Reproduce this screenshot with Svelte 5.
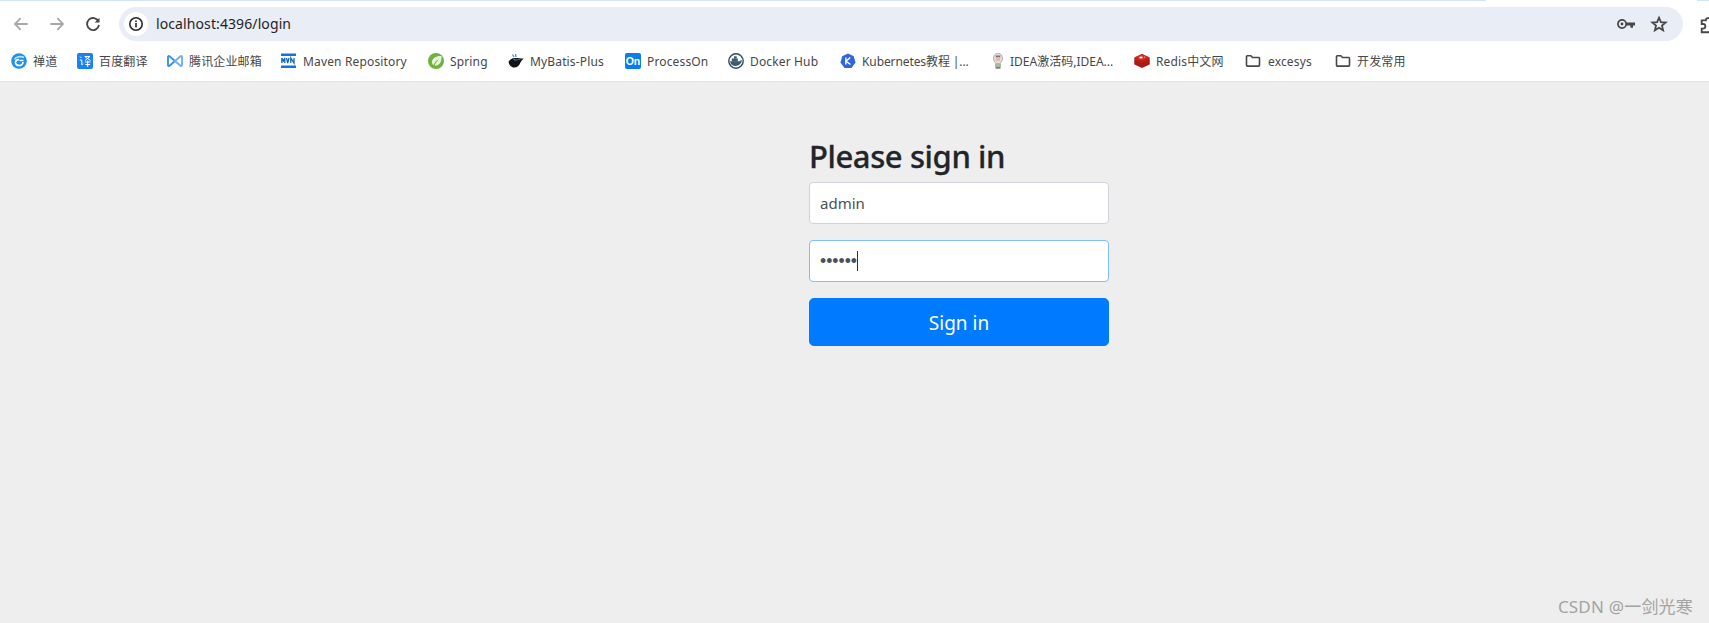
<script>
  const bookmarks = [
    { id: 'zen', label: '禅道', w: 66 },
    { id: 'fy', label: '百度翻译', w: 90 },
    { id: 'tx', label: '腾讯企业邮箱', w: 114 },
    { id: 'mvn', label: 'Maven Repository', w: 147 },
    { id: 'spring', label: 'Spring', w: 80 },
    { id: 'mb', label: 'MyBatis-Plus', w: 117 },
    { id: 'on', label: 'ProcessOn', w: 103 },
    { id: 'docker', label: 'Docker Hub', w: 112 },
    { id: 'k8s', label: 'Kubernetes教程 |...', w: 150, tight: true },
    { id: 'idea', label: 'IDEA激活码,IDEA...', w: 144, tight: true, close: true },
    { id: 'redis', label: 'Redis中文网', w: 111 },
    { id: 'folder', label: 'excesys', w: 90, wide: true },
    { id: 'folder', label: '开发常用', w: 70 }
  ];
</script>

<div class="page">
  <header class="chrome">
    <div class="progress">
      <span class="p1"></span>
      <span class="p2"></span>
    </div>
    <div class="toolbar">
      <div class="navs">
        <svg class="nav" viewBox="0 0 24 24" fill="none" stroke="#a8a8a8" stroke-width="2.200"><path d="M20 12H5M11.500 5L4.800 12l6.700 7"/></svg>
        <svg class="nav" viewBox="0 0 24 24" fill="none" stroke="#a8a8a8" stroke-width="2.200"><path d="M4 12h15M12.500 5l6.700 7-6.700 7"/></svg>
        <svg class="nav" viewBox="0 0 24 24" fill="none" stroke="#474747" stroke-width="2.200"><path d="M18.600 9A7.200 7.200 0 1 0 19.200 13"/><path d="M19.800 4.400V10.200H14z" fill="#474747" stroke="none"/></svg>
      </div>
      <div class="omnibox">
        <span class="info">
          <svg viewBox="0 0 16 16" width="16" height="16" fill="none"><circle cx="8" cy="8" r="6.200" stroke="#2b2b2b" stroke-width="1.600"/><rect x="7.200" y="7" width="1.600" height="4.400" fill="#2b2b2b"/><rect x="7.200" y="4.500" width="1.600" height="1.600" fill="#2b2b2b"/></svg>
        </span>
        <span class="url">localhost:4396/login</span>
        <span class="spacer"></span>
        <svg class="key" viewBox="0 0 18 10" width="18" height="10" fill="none"><circle cx="5" cy="5" r="4.100" stroke="#474747" stroke-width="1.700"/><circle cx="5" cy="5" r="1.400" fill="#474747"/><path d="M9 3.600h9v2.800h-2v2.400h-2.600V6.400H9z" fill="#474747"/></svg>
        <svg class="star" viewBox="0 0 24 24" width="18" height="18" fill="none" stroke="#474747" stroke-width="2.400"><path d="M12 3.600l2.500 5.900 6.400.5-4.900 4.200 1.500 6.200L12 17.100l-5.500 3.300 1.500-6.200L3.100 10l6.400-.5z"/></svg>
      </div>
      <svg class="ext" viewBox="0 0 24 24" width="22" height="22" fill="none" stroke="#474747" stroke-width="2"><path d="M4 8h4.500a2.500 2.500 0 1 1 5 0H18v4.500a2.500 2.500 0 1 1 0 5V21H4v-4h1.500a2.500 2.500 0 1 0 0-5H4z"/></svg>
    </div>
    <nav class="bookmarks">
      {#each bookmarks as b}
        <div class="bm" style="width:{b.w}px">
          <span class="ico">
            {#if b.id === 'zen'}
              <svg viewBox="0 0 16 16" width="16" height="16"><circle cx="8" cy="8" r="7.800" fill="#1e90f0"/><path d="M13 4.500C10 3 5 3.500 3.500 6.500" stroke="#bfe3ff" stroke-width="1.600" fill="none"/><path d="M12.500 7.500H8.500M12 9c0 2-2 3.500-4 3.500S4 11 4.500 9c.4-1.500 2-2.500 3.500-2.300" stroke="#fff" stroke-width="1.700" fill="none"/></svg>
            {:else if b.id === 'fy'}
              <svg viewBox="0 0 16 16" width="16" height="16"><rect width="16" height="16" rx="2" fill="#1a82f0"/><path d="M3 3.500l1.500 1.500M2.800 7h2v4.800l1.400-1M7.500 3.500h5.500L8 7.500M8 3.800L13.500 7.500M7.800 9h5.800M10.700 7.500v6.500M8.300 11.500h4.800" stroke="#fff" stroke-width="1" fill="none"/></svg>
            {:else if b.id === 'tx'}
              <svg viewBox="0 0 16 16" width="16" height="16" fill="none" stroke-width="1.900"><path d="M8 8L2.500 3.300C1.700 2.700 1 3 1 4v8c0 1 .7 1.300 1.500.7z" stroke="#3b8eea"/><path d="M8 8l5.500-4.700c.8-.6 1.500-.3 1.500.7v8c0 1-.7 1.300-1.500.7z" stroke="#6cb2f2"/></svg>
            {:else if b.id === 'mvn'}
              <svg viewBox="0 0 16 16" width="16" height="16"><rect y="0.500" width="15" height="2.500" fill="#1670d8"/><rect y="12.500" width="15" height="2.500" fill="#1670d8"/><path d="M.8 10V5l1.500 3 1.500-3v5M5.500 5l1.200 5L8 5M9.800 10V5l3.200 5V5" stroke="#1565c0" stroke-width="1.300" fill="none"/></svg>
            {:else if b.id === 'spring'}
              <svg viewBox="0 0 16 16" width="16" height="16"><circle cx="8" cy="8" r="8" fill="#6db33f"/><path d="M13.500 3C9.500 2.500 4 4.500 4 9.300c0 1.300.8 2.300 1.600 2.900C6.600 8.800 8.800 7 11.300 6.300 9 8 7.500 9.800 6.800 12.600c3.500.6 7-2.600 6.700-9.600z" fill="#eaf6dc"/></svg>
            {:else if b.id === 'mb'}
              <svg viewBox="0 0 16 16" width="16" height="16"><path d="M.5 9c1-2 3-4 7-4 3 0 5 .5 8 .5-1 1.500-2.500 2.500-3 4C11.500 12.500 9 14.500 6 14.500 3.500 14.500 1 12 .5 9z" fill="#141414"/><path d="M4.500 1.500l1.500 2.500M7.500 1l.5 3" stroke="#3a8ee6" stroke-width="1.300" fill="none"/><path d="M5 5.500c2 1.500 5 1.700 9-.2-1 1.500-6 3-8 1.700z" fill="#3a8ee6"/></svg>
            {:else if b.id === 'on'}
              <div class="on">On</div>
            {:else if b.id === 'docker'}
              <svg viewBox="0 0 16 16" width="16" height="16"><circle cx="8" cy="8" r="7.200" fill="#fff" stroke="#2f4a5f" stroke-width="1.400"/><path d="M2 8.300h9.500c.6-.8 1.500-1.100 2.400-1-.2 3-2.900 5.700-6.400 5.700-3 0-5-1.800-5.500-4.700z" fill="#3c5a70"/><rect x="3.800" y="5.500" width="6" height="3" fill="#3c5a70"/><rect x="6" y="3.300" width="2.700" height="2.300" fill="#3c5a70"/></svg>
            {:else if b.id === 'k8s'}
              <svg viewBox="0 0 16 16" width="16" height="16"><path d="M8 .5l5.800 2.800 1.700 6.200-4 5.500H4.500l-4-5.500 1.700-6.200z" fill="#2f66e0"/><path d="M5.800 4.500v7M10.300 4.500L6 8.300l4.500 3.200" stroke="#fff" stroke-width="1.400" fill="none"/></svg>
            {:else if b.id === 'idea'}
              <svg viewBox="0 0 16 16" width="16" height="16"><ellipse cx="8" cy="5.500" rx="4.500" ry="5.300" fill="#e2e2dc" stroke="#9a9a9a" stroke-width=".8"/><rect x="5.800" y="2.500" width="4.400" height="2" fill="#8a5a8a"/><circle cx="8" cy="6" r="2.300" fill="#e6b9a2"/><rect x="5" y="10.500" width="6" height="3.500" fill="#9fbf9a"/><rect x="5.500" y="14" width="5" height="1.700" fill="#7b7b7b"/></svg>
            {:else if b.id === 'redis'}
              <svg viewBox="0 0 16 16" width="16" height="16"><path d="M.3 4.500L8 1l7.700 3.500v7L8 15 .3 11.500z" fill="#b8201a"/><path d="M.3 7.800L8 11.300l7.700-3.500M.3 10L8 13.500 15.700 10" stroke="#7f1510" stroke-width=".6" fill="none"/><path d="M.5 4.500L8 1l7.500 3.500L8 8z" fill="#d42a20"/><ellipse cx="7" cy="4.500" rx="1.800" ry=".9" fill="#fff"/><path d="M10 3.300l1 .8-1 .8z" fill="#f5c6c0"/></svg>
            {:else}
              <svg viewBox="0 0 16 16" width="16" height="16" fill="none" stroke="#474747" stroke-width="1.600"><path d="M1.500 3.500c0-.5.3-.8.800-.8h3.500L7.500 4.500h6.200c.5 0 .8.300.8.800v7c0 .5-.3.800-.8.800H2.300c-.5 0-.8-.3-.8-.8z"/></svg>
            {/if}
          </span>
          <span class="label" class:tight={b.tight} class:close={b.close} class:wide={b.wide}>{b.label}</span>
        </div>
      {/each}
    </nav>
  </header>

  <main class="content">
    <form class="signin">
      <h2>Please sign in</h2>
      <div class="field">admin</div>
      <div class="field focus"><span class="dots">••••••</span><span class="caret"></span></div>
      <button type="button"><span class="btn-text">Sign in</span></button>
    </form>
    <div class="watermark">CSDN @一剑光寒</div>
  </main>
</div>

<style>
  :global(body) {
    margin: 0;
    overflow: hidden;
  }
  .page {
    width: 1709px;
    height: 623px;
    display: flex;
    flex-direction: column;
    overflow: hidden;
    font-family: "Noto Sans", "Noto Sans CJK SC", sans-serif;
    background: #eeeeee;
  }
  .chrome {
    background: #fff;
    height: 82px;
    box-sizing: border-box;
    border-bottom: 1px solid #e3e3e3;
    flex: none;
    display: flex;
    flex-direction: column;
  }
  .progress {
    height: 1px;
    display: flex;
    justify-content: space-between;
    flex: none;
  }
  .p1 {
    width: 1486px;
    background: #d3e3fd;
  }
  .p2 {
    width: 12px;
    background: #d3e3fd;
  }
  .toolbar {
    height: 40px;
    display: flex;
    align-items: center;
    flex: none;
    padding-top: 6px;
    box-sizing: border-box;
    white-space: nowrap;
  }
  .navs {
    display: flex;
    gap: 16px;
    width: 119px;
    padding-left: 11px;
    box-sizing: border-box;
    flex: none;
  }
  .nav {
    width: 20px;
    height: 20px;
  }
  .omnibox {
    flex: none;
    width: 1564px;
    height: 34px;
    border-radius: 17px;
    background: #e9edf6;
    display: flex;
    align-items: center;
    padding: 0 15px 0 5px;
    box-sizing: border-box;
  }
  .info {
    width: 24px;
    height: 24px;
    border-radius: 50%;
    background: #fff;
    display: flex;
    align-items: center;
    justify-content: center;
    flex: none;
  }
  .url {
    margin-left: 8px;
    margin-top: -1px;
    font-size: 14px;
    color: #1f1f1f;
    letter-spacing: 0.1px;
  }
  .spacer {
    flex: 1;
  }
  .key {
    margin-right: 15px;
  }
  .ext {
    margin-left: 15px;
    flex: none;
  }
  .bookmarks {
    height: 40px;
    display: flex;
    align-items: center;
    padding-left: 11px;
    flex: none;
    white-space: nowrap;
  }
  .bm {
    display: flex;
    align-items: center;
    gap: 6px;
    flex: none;
  }
  .ico {
    width: 16px;
    height: 16px;
    flex: none;
    display: block;
    line-height: 0;
  }
  .ico svg {
    display: block;
  }
  .on {
    width: 16px;
    height: 16px;
    border-radius: 2px;
    background: #0a7cf0;
    color: #fff;
    font: bold 10.5px/16px "Liberation Sans", sans-serif;
    text-align: center;
  }
  .label {
    font-size: 12px;
    color: #474747;
    letter-spacing: 0.15px;
  }
  .tight {
    letter-spacing: -0.1px;
  }
  .close {
    margin-left: -2px;
    letter-spacing: 0;
  }
  .wide {
    margin-left: 1px;
  }
  .content {
    flex: 1;
    position: relative;
    display: flex;
    align-items: flex-start;
    padding-left: 809px;
  }
  .signin {
    width: 300px;
    padding-top: 55px;
    display: flex;
    flex-direction: column;
  }
  h2 {
    margin: 0 0 8px;
    font-size: 31px;
    font-weight: 500;
    letter-spacing: -0.4px;
    line-height: 37px;
    height: 37px;
    color: #212529;
    white-space: nowrap;
    -webkit-text-stroke: 0.3px #212529;
    position: relative;
    top: 1px;
  }
  .field {
    height: 42px;
    box-sizing: border-box;
    border: 1px solid #ced4da;
    border-radius: 4px;
    background: #fff;
    padding: 0 10px;
    margin-bottom: 16px;
    display: flex;
    align-items: center;
    font-size: 15px;
    color: #495057;
  }
  .focus {
    border-color: #80bdff;
  }
  .dots {
    font-size: 17.6px;
    font-family: "Liberation Sans", sans-serif;
  }
  .caret {
    width: 1px;
    height: 20px;
    background: #333;
  }
  button {
    height: 48px;
    border: 1px solid #007bff;
    border-radius: 4.8px;
    background: #007bff;
    color: #fff;
    font-family: inherit;
    font-size: 19px;
    padding: 2px 0 0;
  }
  .watermark {
    position: absolute;
    right: 16px;
    bottom: 5px;
    font-size: 17px;
    letter-spacing: 0.2px;
    color: #a3a3a3;
    white-space: nowrap;
  }
</style>
